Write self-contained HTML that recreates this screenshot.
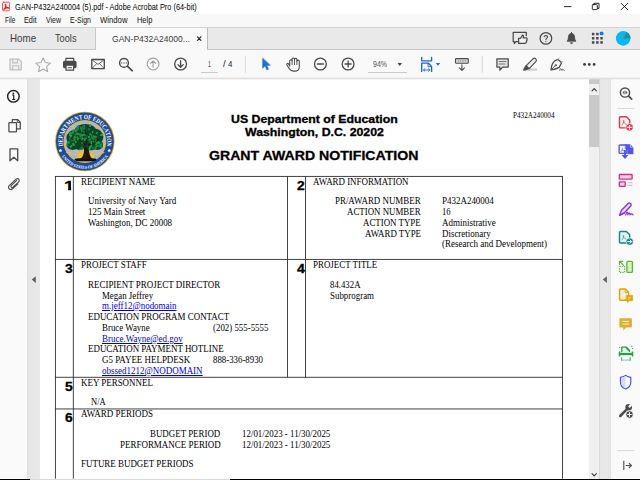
<!DOCTYPE html>
<html lang="en"><head><meta charset="utf-8"><title>GAN-P432A240004 (5).pdf - Adobe Acrobat Pro (64-bit)</title>
<style>
html,body{margin:0;padding:0}
body{width:640px;height:480px;overflow:hidden;position:relative;background:#fff;font-family:'Liberation Sans',sans-serif}
.a{position:absolute}
.t{position:absolute;white-space:pre;line-height:1;transform-origin:0 0;color:#000}
.s{font-family:'Liberation Sans',sans-serif}
.r{font-family:'Liberation Serif',serif}
.b{font-weight:bold;-webkit-text-stroke:0.3px #000}
.u{text-decoration:underline;text-decoration-thickness:0.6px;text-underline-offset:0.8px}
svg{position:absolute;left:0;top:0;overflow:visible}
</style></head><body>

<div class="a" id="titlebar" style="left:0;top:0;width:640px;height:14px;background:#fff"></div>
<div class="a" id="menubar" style="left:0;top:14px;width:640px;height:13px;background:#f8f8f8"></div>
<div class="a" id="tabbar" style="left:0;top:27px;width:640px;height:22.5px;background:#e9e9e9;border-top:1px solid #d2d2d2;box-sizing:border-box"></div>
<div class="a" id="tabline" style="left:0;top:48.8px;width:640px;height:1px;background:#c6c6c6"></div>
<div class="a" id="activetab" style="left:94.5px;top:27.5px;width:113px;height:22.5px;background:#f9f9f9;border-left:1px solid #c8c8c8;border-right:1px solid #bcbcbc;box-sizing:border-box"></div>
<div class="a" id="toolbar" style="left:0;top:50px;width:640px;height:28.5px;background:#f9f9f9"></div>
<div class="a" id="leftpane" style="left:0;top:79px;width:27px;height:401px;background:#fafafa"></div>
<div class="a" id="leftstrip" style="left:27px;top:79px;width:13px;height:401px;background:linear-gradient(to right,#dcdcdc 0,#e6e6e6 2px,#e9e9e9 100%)"></div>
<div class="a" id="page" style="left:40px;top:79px;width:549.4px;height:401px;background:#fff"></div>
<div class="a" id="vscroll" style="left:589.4px;top:79px;width:9.8px;height:401px;background:#f0f0f0">
  <div class="a" style="left:0;top:0;width:100%;height:5px;background:#c9c9c9"></div>
  <div class="a" style="left:0;top:16px;width:100%;height:52.1px;background:#c9c9c9"></div>
</div>
<div class="a" id="rightstrip" style="left:599.2px;top:79px;width:11.5px;height:401px;background:linear-gradient(to right,#d0d0d0 0,#dedede 0.9px,#e8e8e8 1.6px,#e8e8e8 10.6px,#dcdcdc 11.2px,#e6e6e6 100%)"></div>
<div class="a" id="rightpane" style="left:610.7px;top:79px;width:29.3px;height:401px;background:#fafafa"></div>
<div class="a" id="toolbarline" style="left:0;top:77.4px;width:640px;height:2.4px;background:linear-gradient(to bottom,rgba(225,225,225,0) 0,rgba(222,222,222,1) 45%,rgba(226,226,226,0) 100%)"></div>
<div class="a" id="bottombar" style="left:0;top:478.7px;width:640px;height:1.3px;background:linear-gradient(to right,#000 0,#000 30px,#d9d9d9 30px,#d9d9d9 230px,#000 230px,#000 100%)"></div>


<svg id="icons" width="640" height="480" viewBox="0 0 640 480" fill="none" stroke-linecap="round" stroke-linejoin="round">
<!-- app icon -->
<g id="appicon"><rect x="2.5" y="2.2" width="7.1" height="8.6" rx="1" fill="#fff" stroke="#ee3a3a" stroke-width="0.9"/>
<path d="M3.9 9.3C5.2 8.3 6 6.4 5.9 4.8C5.8 3.9 5.1 4.2 5.3 5.1C5.7 6.6 6.9 7.9 8.4 8.2C8.9 8 8.6 7.5 7.7 7.6C6.3 7.8 5 8.4 3.9 9.3Z" fill="#f01818" stroke="#f01818" stroke-width="1.1"/></g>
<!-- window controls -->
<g id="winctl" stroke="#111" stroke-width="0.9"><path d="M564.3 6.6H571"/>
<rect x="592.3" y="4.6" width="5" height="5" rx="0.8"/><path d="M593.8 4.4V3.3H599V8.4H597.6"/>
<path d="M621.2 3.3L627.7 9.7M627.7 3.3L621.2 9.7"/></g>
<!-- tab close -->
<path d="M197.5 36.9L200.9 40.3M200.9 36.9L197.5 40.3" stroke="#222" stroke-width="1.2"/>
<!-- tabbar right icons -->
<g id="tabicons" stroke="#4a4a4a" stroke-width="1.25">
<path d="M513.2 32.3H526.3V35.5M518 41.6H515.8L514.3 43.6V41.6H513.2V32.3"/>
<path d="M518.6 38.3H520.6L522.4 35.2C523.4 35 523.7 35.9 523.2 37.8H526.3C527.3 38 527.3 39 526.8 39.4C527.2 40 527 40.6 526.5 40.9C526.8 41.5 526.5 42.1 526 42.3C526.1 43 525.6 43.4 525 43.4H520.6L518.6 43.4Z" fill="#f4f4f4"/>
<circle cx="545.9" cy="38.4" r="5.8"/>
<path d="M544.2 36.8C544.2 35.2 547.6 35.2 547.6 36.9C547.6 38.1 545.9 38.1 545.9 39.7" stroke-width="1.1"/><circle cx="545.9" cy="41.6" r="0.55" fill="#4a4a4a" stroke="none"/>
<path d="M571.5 33.4C573.6 33.4 574.6 35 574.6 37C574.6 39.4 575.3 40.3 576 41.2H567C567.7 40.3 568.4 39.4 568.4 37C568.4 35 569.4 33.4 571.5 33.4Z" fill="#4a4a4a" stroke-width="0.8"/><path d="M571.5 32.4V33.4" stroke-width="1"/>
<path d="M570.4 43C570.8 44 572.2 44 572.6 43Z" fill="#4a4a4a" stroke-width="0.7"/>
</g>
<g id="appsgrid" fill="#4a4a4a" stroke="none">
<rect x="591.9" y="32.8" width="2.5" height="2.5"/><rect x="596.1" y="32.8" width="2.5" height="2.5"/>
<rect x="591.9" y="37" width="2.5" height="2.5"/><rect x="596.1" y="37" width="2.5" height="2.5"/><rect x="600.3" y="37" width="2.5" height="2.5"/>
<rect x="591.9" y="41.2" width="2.5" height="2.5"/><rect x="596.1" y="41.2" width="2.5" height="2.5"/><rect x="600.3" y="41.2" width="2.5" height="2.5"/>
<circle cx="601.6" cy="33.4" r="1.95" fill="#1473e6"/></g>
<g id="avatar" stroke="none"><circle cx="623.2" cy="38.4" r="7.3" fill="#0fb5ee"/><path d="M623.2 38.4L626.5 31.9A7.3 7.3 0 0 1 630.5 38.4Z" fill="#1592a8"/></g>

<!-- toolbar icons -->
<g id="tb-save" stroke="#bfbfbf" stroke-width="1.3"><path d="M10 59.1H18.6L21.3 61.8V69.8H10Z" fill="#f1f1f1"/><path d="M12.7 59.4V62.9H17.5V59.4M12.6 69.6V65.7H18.7V69.6" stroke-width="1.1"/></g>
<path id="tb-star" d="M43.1 57.9L45.25 62.6L50.4 63.15L46.55 66.6L47.65 71.6L43.1 69L38.55 71.6L39.65 66.6L35.8 63.15L40.95 62.6Z" stroke="#a6a6a6" stroke-width="1.05"/>
<g id="tb-print" stroke="#4a4a4a" stroke-width="1.2"><path d="M65.9 61.4V58.4H73.7V61.4"/><rect x="63.6" y="61.4" width="12.4" height="6.2" rx="1" fill="#4a4a4a"/><rect x="66" y="65.2" width="7.6" height="5" fill="#f9f9f9"/><path d="M68 67.7H71.6" stroke-width="0.9"/></g>
<g id="tb-mail" stroke="#4a4a4a" stroke-width="1.3"><rect x="91.8" y="59.5" width="12.5" height="9.1"/><path d="M92 59.8L98 64.4L104.1 59.8M92 68.4L96.7 63.6M104.1 68.4L99.4 63.6" stroke-width="0.8"/></g>
<g id="tb-find" stroke="#4a4a4a"><circle cx="124" cy="62.9" r="4.4" stroke-width="1.4"/><path d="M127.4 66.2L132.1 70.7" stroke-width="1.8"/><path d="M121.7 62.9h0.01M124 62.9h0.01M126.3 62.9h0.01" stroke-width="1.25"/></g>
<g id="tb-up" stroke="#9e9e9e" stroke-width="1.05"><circle cx="153.1" cy="64" r="5.9"/><path d="M153.1 67.3V60.9M150.5 63.4L153.1 60.8L155.7 63.4"/></g>
<g id="tb-down" stroke="#4a4a4a" stroke-width="1.3"><circle cx="180.6" cy="64" r="5.9"/><path d="M180.6 60.7V67.1M178 64.6L180.6 67.2L183.2 64.6"/></g>
<path d="M201 72.5H217.8M368 72.5H407" stroke="#c4c4c4" stroke-width="0.9" stroke-linecap="butt"/>
<path d="M245.4 55.6V72.8M482.3 55.6V72.8" stroke="#d6d6d6" stroke-width="0.9" stroke-linecap="butt"/>
<path id="tb-select" d="M262.6 58.3V68.3L265.1 66L266.9 70L268.6 69.2L266.8 65.4L270.2 65.2Z" fill="#1f6fd6" stroke="#1f6fd6" stroke-width="0.5"/>
<g id="tb-hand" stroke="#4a4a4a" stroke-width="1.05" fill="#f9f9f9"><path d="M289.7 66V60.7C289.7 59.3 292.1 59.3 292.1 60.7V59.1C292.1 57.7 294.5 57.7 294.5 59.1V59.4C294.5 58 296.9 58 296.9 59.4V61.1C296.9 59.8 299.3 59.8 299.3 61.1V66.4C299.3 69.4 297.4 71.1 294.8 71.1H293.6C291.7 71.1 290.5 70.4 289.3 68.6L286.9 65C286.1 63.8 287.6 62.8 288.5 63.9L289.7 65.6"/><path d="M292.1 60.7V64.6M294.5 59.1V64.6M296.9 61V64.6" stroke-width="0.9"/></g>
<g id="tb-zoomout" stroke="#4a4a4a" stroke-width="1.3"><circle cx="320.4" cy="64" r="5.9"/><path d="M317.4 64H323.4"/></g>
<g id="tb-zoomin" stroke="#4a4a4a" stroke-width="1.3"><circle cx="348.1" cy="64" r="5.9"/><path d="M345.1 64H351.1M348.1 61V67"/></g>
<path d="M397.5 62.9H402L399.75 65.9Z" fill="#444" stroke="none"/>
<g id="tb-fit" stroke="#1b67d2" stroke-width="1.35"><path d="M421.7 57.3V60.8H431.6V57.3"/><path d="M421.7 71.4V63.1H428.2L431.6 66.5V71.4" /><path d="M428 63.3V66.7H431.4" stroke-width="0.9"/><path d="M423.6 70H429.8M424.8 68.8L423.5 70L424.8 71.2M428.6 68.8L429.9 70L428.6 71.2" stroke-width="0.9"/></g>
<path d="M435.8 62.9H440.2L438 65.7Z" fill="#1f6fd6" stroke="none"/>
<g id="tb-scroll" stroke="#4a4a4a" stroke-width="1.1"><rect x="455.5" y="58.6" width="12.8" height="4.6" rx="0.8" fill="#d8d8d8"/><path d="M458.4 60.9h0.01M460.7 60.9h0.01M463 60.9h0.01M465.3 60.9h0.01" stroke-width="1.2" stroke="#777"/><path d="M461.9 64.9V70.3M459.4 67.9L461.9 70.4L464.4 67.9"/></g>
<g id="tb-comment" stroke="#4a4a4a" stroke-width="1.25"><path d="M496.9 58.8H508.2V67.1H502.6L499.9 70.2V67.1H496.9Z" fill="#e4e4e4"/><path d="M499.2 61.5H506M499.2 64H505" stroke-width="0.9" stroke="#6a6a6a"/></g>
<g id="tb-highlight"><rect x="527.4" y="68.4" width="9.6" height="2.3" fill="#cdcdcd" stroke="none"/><path d="M526 65.8L533.2 58.7C534.8 57.3 537.4 59.6 536 61.3L529.2 68.6Z" stroke="#4a4a4a" stroke-width="1.15" fill="#efefef"/><path d="M526 65.8L529.2 68.6L526.6 69.9L523.3 70.4L524.4 67.6Z" fill="#4a4a4a" stroke="#4a4a4a" stroke-width="0.6"/></g>
<g id="tb-sign" stroke="#4a4a4a" stroke-width="1.25"><path d="M558 59.4L561.6 62.8L559.2 67.4C556.6 68.8 553.8 69.6 551 70L551.5 66.6C552.2 63.8 553.6 61.4 555.8 60.4Z"/><path d="M551.3 69.7L555.2 65.6" stroke-width="0.9"/><circle cx="555.7" cy="65.2" r="0.8" stroke-width="0.7"/><path d="M558 59.4L559.4 57.8M561.6 62.8L563 61.4" stroke-width="0.9" stroke="#aaa"/><path d="M559.6 70.3C560.2 68 561.4 68 561.2 70.3C561.8 68.6 562.8 68.6 562.8 70.3C563.4 69.4 564 69.5 564.4 70.2" stroke-width="0.8"/></g>
<g id="tb-more" fill="#3a3a3a" stroke="none"><circle cx="584.5" cy="64.4" r="1.35"/><circle cx="589.3" cy="64.4" r="1.35"/><circle cx="594.1" cy="64.4" r="1.35"/></g>

<!-- left pane icons -->
<g id="lp-info" stroke="#1e1e1e"><circle cx="13.4" cy="96.3" r="5.8" stroke-width="1.4"/><path d="M12.3 95.2H13.7V99.2M12.1 99.5H15.2" stroke-width="1.2" stroke-linecap="butt"/><circle cx="13.4" cy="93.3" r="0.9" fill="#1e1e1e" stroke="none"/></g>
<g id="lp-pages" stroke="#4a4a4a" stroke-width="1.25"><path d="M12.3 122.2V119.5H17.5L20.3 122.3V128.9H16.7"/><path d="M17.3 119.7V122.5H20.1" stroke-width="0.9"/><rect x="8.9" y="122.5" width="7.6" height="9.3" rx="0.6"/></g>
<path id="lp-bookmark" d="M10 148.8H17.7V160.8L13.85 157.3L10 160.8Z" stroke="#4a4a4a" stroke-width="1.3"/>
<path id="lp-attach" d="M16.6 180.6L11.4 185.4C10.2 186.6 11.8 188.2 13 187.1L18.4 182.1C20.6 180 18 177.4 15.8 179.4L9.4 185.3C6.8 187.8 10.2 191 12.8 188.5L17.9 183.8" stroke="#4a4a4a" stroke-width="1.15"/>
<path d="M35.8 276.3V282.9L31.7 279.6Z" fill="#5e5e5e" stroke="none"/>
<path d="M606.9 276.3V282.9L602.8 279.6Z" fill="#5e5e5e" stroke="none"/>
<!-- scrollbar arrows -->
<path d="M592 90.8L594.2 88.6L596.4 90.8" stroke="#333" stroke-width="1.1"/>
<path d="M592 473.6L594.2 475.8L596.4 473.6" stroke="#333" stroke-width="1.1"/>

<!-- right pane icons -->
<g id="rp-search" stroke="#4a4a4a"><circle cx="625" cy="92.5" r="4.6" stroke-width="1.45"/><path d="M628.6 96.2L631.7 99.2" stroke-width="1.7"/><path d="M624.3 91L622.7 92.5L624.3 94ZM625.8 91L627.4 92.5L625.8 94Z" fill="#4a4a4a" stroke-width="0.3"/></g>
<path d="M617 108.5H634.4M617 450.6H634.4" stroke="#d4d4d4" stroke-width="0.9" stroke-linecap="butt"/>
<g id="rp-create" stroke="#df3548"><path d="M620.4 116.8H626.4L629.7 120.1V127C629.7 127.5 629.3 127.9 628.8 127.9H620.4C619.9 127.9 619.5 127.5 619.5 127V117.7C619.5 117.2 619.9 116.8 620.4 116.8Z" stroke-width="1.4" fill="#fdf0f1"/><path d="M621.8 125.2C623.2 124 624 122.2 624 120.8C623.8 119.8 623.2 120.2 623.4 121.2C623.8 122.8 625 124 626.4 124.2" stroke-width="0.65"/><circle cx="629.5" cy="127.3" r="3.7" fill="#df3548" stroke="#fafafa" stroke-width="0.7"/><path d="M627.5 127.3H631.5M629.5 125.3V129.3" stroke="#fff" stroke-width="1.05"/></g>
<g id="rp-export" stroke="#5056e6"><rect x="619.1" y="145" width="7.6" height="8.3" rx="0.9" stroke-width="1.3" fill="#f2f2fe"/><path d="M625.6 144.5H630.2L633.1 147.4V153.9H627.6V149H625.6Z" fill="#5056e6" stroke-width="0.6"/><path d="M630.4 144.8V147.2H632.8" stroke="#fafafa" stroke-width="0.6"/><path d="M621 151.4C622 150.4 622.6 149.2 622.6 148.2M622.4 150.4C623.2 150.8 623.8 150.8 624.4 150.6" stroke-width="0.7"/><path d="M625 150V156" stroke-width="1.9" stroke-linecap="butt"/><path d="M625 150V153.2" stroke="#fafafa" stroke-width="3" stroke-linecap="butt" opacity="0"/><path d="M621.5 154.9H628.5L625 158.9Z" fill="#5056e6" stroke="none"/></g>
<g id="rp-organize" stroke="#cf2f8a"><rect x="619.3" y="174.5" width="12.8" height="4.6" rx="0.7" stroke-width="1.35" fill="#f4cfe4"/><rect x="619.3" y="181.8" width="5.9" height="4.5" rx="0.6" stroke-width="1.35" fill="#f4cfe4"/><path d="M627.7 182.7H632.5M627.7 185.3H632.5" stroke="#ecaad0" stroke-width="1.1" stroke-linecap="butt"/></g>
<g id="rp-sign" stroke="#8a31e2" stroke-width="1.4"><path d="M619.6 215.3L621.5 210.3L628.2 203.5C629.8 202 632.2 204.4 630.7 206L624.2 212.9Z" fill="#eadcfb"/><path d="M619.6 215.4L624.2 213" stroke-width="1.2"/><path d="M625.8 215C626.5 211.4 628.1 211.4 627.9 214.8C628.7 212.4 629.9 212.4 629.9 214.8C630.7 213.5 631.9 213.7 632.9 214.9" stroke-width="1.25"/></g>
<g id="rp-send" stroke="#16868c"><path d="M620.4 231.5H626.4L629.7 234.8V242.1C629.7 242.6 629.3 243 628.8 243H620.4C619.9 243 619.5 242.6 619.5 242.1V232.4C619.5 231.9 619.9 231.5 620.4 231.5Z" stroke-width="1.4" fill="#e3f2f3"/><path d="M621.8 240C623 239 623.8 237.2 623.8 235.8C623.6 234.8 623 235.2 623.2 236.2C623.6 237.8 624.6 238.8 626 239" stroke-width="0.6"/><circle cx="629.7" cy="241.6" r="3.7" fill="#16868c" stroke="#fafafa" stroke-width="0.7"/><path d="M627.7 241.6H631.4M630 239.9L631.7 241.6L630 243.3" stroke="#fff" stroke-width="0.95"/></g>
<g id="rp-compress" stroke="#5abc2a"><rect x="626.9" y="261.3" width="5.5" height="11.1" rx="0.9" stroke-width="1.35" fill="#dcf1ce"/><path d="M619.4 266.5H624.6V272.4H619.4Z" stroke-width="1.1" stroke-dasharray="1.4 1" stroke-linecap="butt"/><path d="M619.5 261.3H622.7M619.5 261.3V264.5M619.8 261.6L623.6 265.4" stroke-width="1.15"/></g>
<g id="rp-commentdoc" stroke="#d7a50c"><path d="M620.4 289H625.4L628.7 292.3V299.3C628.7 299.8 628.3 300.2 627.8 300.2H620.4C619.9 300.2 619.5 299.8 619.5 299.3V289.9C619.5 289.4 619.9 289 620.4 289Z" stroke-width="1.4" fill="#f4ecd2"/><path d="M625.2 289.2V292.5H628.5" stroke-width="0.9"/><path d="M626.5 295.4H632.6V300.7H629.2L627.6 302.5V300.7H626.5Z" fill="#d7a50c" stroke-width="0.7"/><path d="M628 297.4H631.2M628 298.9H630.4" stroke="#f7edc8" stroke-width="0.6" stroke-linecap="butt"/></g>
<g id="rp-comment"><path d="M620.4 318.2H630.9C631.5 318.2 631.9 318.6 631.9 319.2V326.4C631.9 327 631.5 327.4 630.9 327.4H626L623.3 330.8V327.4H620.4C619.8 327.4 619.4 327 619.4 326.4V319.2C619.4 318.6 619.8 318.2 620.4 318.2Z" fill="#dbb02c" stroke="none"/><path d="M622.4 321.4H629M622.4 324H629" stroke="#fbf3d8" stroke-width="1" stroke-linecap="butt"/></g>
<g id="rp-scan" stroke="#23a148"><path d="M621.8 351.6V347.1H626.2L629.4 350.3V351.6" stroke-width="1.3" fill="#e3f4e8"/><path d="M626 347.2C626.3 349.4 627.4 350.3 629.3 350.5Z" fill="#23a148" stroke-width="0.8"/><path d="M619.5 351.4V356.6M632.5 351.4V356.6" stroke-width="1.5" stroke-linecap="butt"/><path d="M619.5 354H632.5" stroke-width="2.3" stroke-linecap="butt"/><path d="M621.7 357.6V360.4M630.2 357.6V360.4" stroke-width="0.9"/><path d="M622.6 360.1H629.6" stroke-width="1" stroke-dasharray="1.1 0.9" stroke-linecap="butt"/><path d="M619.7 347.4h0.01M631.8 346.4h0.01M632.6 348.6h0.01" stroke-width="1.1"/></g>
<g id="rp-protect" stroke="#3d45ec" stroke-width="1.1"><path d="M625.6 375.4C627.4 376.6 629 377.2 630.8 377.4V382C630.8 385.4 628.6 387.8 625.6 389C622.6 387.8 620.4 385.4 620.4 382V377.4C622.2 377.2 623.8 376.6 625.6 375.4Z" fill="#fafafa"/><path d="M625.6 376C624 377 622.6 377.6 620.9 377.8V382C620.9 385 622.8 387.2 625.6 388.4Z" fill="#d9dbf7" stroke="none"/></g>
<g id="rp-tools" stroke="#4a4a4a"><path d="M620.2 416L627 409.2" stroke-width="2.5"/><circle cx="628.7" cy="407.3" r="3.3" fill="#4a4a4a" stroke="none"/><path d="M628.9 407.1L632.6 403.4" stroke="#fafafa" stroke-width="2.3" stroke-linecap="butt"/><circle cx="629.5" cy="414.5" r="3.7" fill="#4a4a4a" stroke="#fafafa" stroke-width="0.8"/><path d="M627.6 414.5H631.4M629.5 412.6V416.4" stroke="#fff" stroke-width="1"/></g>
<g id="rp-collapse" stroke="#4a4a4a" stroke-width="1.1"><path d="M623.8 460.8V470" stroke-linecap="butt"/><path d="M626.2 465.5H631.2M629.2 463.4L631.4 465.5L629.2 467.6"/></g>
</svg>


<svg id="docpage" width="640" height="480" viewBox="0 0 640 480" fill="none">
<g id="table" stroke="#2e2e2e" stroke-width="0.9">
<path d="M55 176.45H563M55 259.45H563M55 377.3H563M55 408.95H563"/>
<path d="M55.45 176V478.7M73.35 176.4V478.7M562.5 176V478.7"/>
<path d="M287.5 176.4V377.3M305.5 176.4V377.3"/>
</g>
<g id="seal" transform="translate(84.85 141.5)">
<circle r="29.8" fill="#e2b01e"/>
<circle r="28.9" fill="#1c4a9c"/>
<circle r="21.4" fill="#e6b820"/>
<circle r="20.4" fill="#a9b3e3"/>
<g stroke="#ecc42c" stroke-width="1.1">
<path d="M0.5 15.5L-20 3M0.5 15.5L-18 -8.5M0.5 15.5L-12 -16M0.5 15.5L-4.5 -19.8M0.5 15.5L5.5 -19.8M0.5 15.5L13 -15.5M0.5 15.5L18.6 -8M0.5 15.5L20.2 3.5M0.5 15.5L-19 10.5M0.5 15.5L19.5 11"/>
</g>
<path d="M-8 17.6A8.6 7.4 0 0 1 9.2 17.6Z" fill="#f2c81c"/>
<path d="M-9.8 17.2C-6 16.2 7.4 16.2 11.2 17.2C12.4 18.4 10.6 19.6 7 19.8H-5.6C-9.2 19.6 -11 18.4 -9.8 17.2Z" fill="#15100b"/>
<path d="M-4.2 17.6C-1 14.2 -0.4 10.2 -1 5.6L-7 0L-5.4 -1.2L0.2 3.2L1.8 -3L3.8 -2.6L3.4 4.2L9 0.4L10 1.8L4.2 7C4 11.4 4.8 14.6 7.4 17.6Z" fill="#24160c"/>
<g fill="#0d4423"><ellipse cx="-8.5" cy="-3.5" rx="10" ry="8.5"/><ellipse cx="9" cy="-4.5" rx="9.5" ry="8.5"/><ellipse cx="0.5" cy="-10.5" rx="11" ry="7"/><ellipse cx="-12" cy="3.5" rx="6.2" ry="5"/><ellipse cx="12.5" cy="3.5" rx="5.8" ry="5"/><ellipse cx="0" cy="-2" rx="9" ry="7.5"/><ellipse cx="-5" cy="5" rx="5" ry="3.5"/><ellipse cx="6.5" cy="5.5" rx="5" ry="3.2"/></g>
<path d="M0.8 4L-6 -3L-10.5 -4.5M-6 -3L-6.5 -8.5M1.2 3L2.4 -5L0 -10.5M2.4 -5L6.5 -9.5M3.4 4L9.5 -1L14 -2M9.5 -1L11 -6.5" stroke="#1e140c" stroke-width="1.1" fill="none"/>
<g><ellipse cx="-6.7" cy="-13.8" rx="1.6" ry="0.7" transform="rotate(96 -6.7 -13.8)" fill="#15803a"/><ellipse cx="-3.1" cy="-11.3" rx="1.5" ry="0.7" transform="rotate(102 -3.1 -11.3)" fill="#1f9a46"/><ellipse cx="5.0" cy="-1.7" rx="1.1" ry="0.9" transform="rotate(9 5.0 -1.7)" fill="#1f9a46"/><ellipse cx="-8.0" cy="-14.0" rx="1.2" ry="0.8" transform="rotate(147 -8.0 -14.0)" fill="#1f9a46"/><ellipse cx="-15.1" cy="-2.0" rx="1.3" ry="0.7" transform="rotate(128 -15.1 -2.0)" fill="#137636"/><ellipse cx="6.9" cy="-6.0" rx="1.4" ry="0.9" transform="rotate(82 6.9 -6.0)" fill="#15803a"/><ellipse cx="-7.6" cy="-4.1" rx="1.4" ry="0.9" transform="rotate(110 -7.6 -4.1)" fill="#1b9042"/><ellipse cx="-14.5" cy="-6.3" rx="1.7" ry="0.8" transform="rotate(88 -14.5 -6.3)" fill="#1b9042"/><ellipse cx="12.1" cy="-8.5" rx="1.4" ry="0.9" transform="rotate(143 12.1 -8.5)" fill="#1b9042"/><ellipse cx="-16.7" cy="1.6" rx="1.6" ry="1.1" transform="rotate(148 -16.7 1.6)" fill="#15803a"/><ellipse cx="8.2" cy="6.8" rx="1.4" ry="1.1" transform="rotate(64 8.2 6.8)" fill="#137636"/><ellipse cx="-9.6" cy="-7.1" rx="1.8" ry="0.7" transform="rotate(81 -9.6 -7.1)" fill="#137636"/><ellipse cx="-2.6" cy="-2.6" rx="1.7" ry="1.1" transform="rotate(123 -2.6 -2.6)" fill="#26a851"/><ellipse cx="-10.1" cy="-4.4" rx="1.6" ry="0.8" transform="rotate(1 -10.1 -4.4)" fill="#26a851"/><ellipse cx="-6.9" cy="-14.5" rx="1.8" ry="1.1" transform="rotate(118 -6.9 -14.5)" fill="#1b9042"/><ellipse cx="10.6" cy="6.5" rx="1.7" ry="0.9" transform="rotate(72 10.6 6.5)" fill="#1b9042"/><ellipse cx="-0.7" cy="-6.8" rx="1.3" ry="1.1" transform="rotate(79 -0.7 -6.8)" fill="#1b9042"/><ellipse cx="-15.1" cy="-7.8" rx="1.1" ry="1.0" transform="rotate(111 -15.1 -7.8)" fill="#1f9a46"/><ellipse cx="3.9" cy="-4.7" rx="1.2" ry="0.9" transform="rotate(176 3.9 -4.7)" fill="#26a851"/><ellipse cx="-0.6" cy="-15.6" rx="1.2" ry="0.8" transform="rotate(48 -0.6 -15.6)" fill="#1f9a46"/><ellipse cx="7.3" cy="-3.5" rx="1.3" ry="1.1" transform="rotate(65 7.3 -3.5)" fill="#1b9042"/><ellipse cx="13.8" cy="1.5" rx="1.3" ry="0.8" transform="rotate(30 13.8 1.5)" fill="#1f9a46"/><ellipse cx="-10.5" cy="-2.8" rx="1.5" ry="1.0" transform="rotate(110 -10.5 -2.8)" fill="#1f9a46"/><ellipse cx="11.6" cy="4.9" rx="1.7" ry="0.8" transform="rotate(93 11.6 4.9)" fill="#15803a"/><ellipse cx="11.0" cy="-4.8" rx="1.3" ry="0.9" transform="rotate(62 11.0 -4.8)" fill="#1f9a46"/><ellipse cx="4.7" cy="7.2" rx="1.8" ry="0.9" transform="rotate(118 4.7 7.2)" fill="#1f9a46"/><ellipse cx="5.4" cy="5.4" rx="1.2" ry="0.9" transform="rotate(128 5.4 5.4)" fill="#1f9a46"/><ellipse cx="-0.8" cy="-13.0" rx="1.7" ry="0.8" transform="rotate(144 -0.8 -13.0)" fill="#1b9042"/><ellipse cx="-4.0" cy="-6.8" rx="1.9" ry="1.0" transform="rotate(31 -4.0 -6.8)" fill="#1f9a46"/><ellipse cx="4.2" cy="-1.3" rx="1.5" ry="1.1" transform="rotate(28 4.2 -1.3)" fill="#137636"/><ellipse cx="-2.5" cy="6.4" rx="1.8" ry="0.8" transform="rotate(45 -2.5 6.4)" fill="#15803a"/><ellipse cx="-6.6" cy="-2.8" rx="1.8" ry="0.7" transform="rotate(133 -6.6 -2.8)" fill="#26a851"/><ellipse cx="6.2" cy="4.8" rx="1.5" ry="1.0" transform="rotate(158 6.2 4.8)" fill="#1f9a46"/><ellipse cx="1.2" cy="-3.3" rx="1.1" ry="0.9" transform="rotate(33 1.2 -3.3)" fill="#1b9042"/><ellipse cx="-13.6" cy="-0.7" rx="1.2" ry="0.7" transform="rotate(123 -13.6 -0.7)" fill="#137636"/><ellipse cx="-15.0" cy="-2.3" rx="1.3" ry="0.8" transform="rotate(139 -15.0 -2.3)" fill="#137636"/><ellipse cx="4.0" cy="-12.4" rx="1.3" ry="0.9" transform="rotate(145 4.0 -12.4)" fill="#137636"/><ellipse cx="16.8" cy="1.6" rx="1.8" ry="1.1" transform="rotate(47 16.8 1.6)" fill="#137636"/><ellipse cx="-2.0" cy="-6.3" rx="1.4" ry="0.8" transform="rotate(121 -2.0 -6.3)" fill="#26a851"/><ellipse cx="-16.2" cy="0.7" rx="1.7" ry="1.1" transform="rotate(28 -16.2 0.7)" fill="#1b9042"/><ellipse cx="5.5" cy="-7.7" rx="1.3" ry="0.8" transform="rotate(84 5.5 -7.7)" fill="#1b9042"/><ellipse cx="17.2" cy="-6.8" rx="1.5" ry="1.1" transform="rotate(150 17.2 -6.8)" fill="#1f9a46"/><ellipse cx="-3.7" cy="-6.2" rx="1.4" ry="0.7" transform="rotate(66 -3.7 -6.2)" fill="#15803a"/><ellipse cx="2.1" cy="-5.7" rx="1.1" ry="0.8" transform="rotate(112 2.1 -5.7)" fill="#137636"/><ellipse cx="-12.1" cy="3.2" rx="1.8" ry="1.0" transform="rotate(122 -12.1 3.2)" fill="#15803a"/><ellipse cx="-3.6" cy="-3.0" rx="1.5" ry="0.9" transform="rotate(59 -3.6 -3.0)" fill="#15803a"/><ellipse cx="-16.8" cy="1.3" rx="1.4" ry="0.7" transform="rotate(169 -16.8 1.3)" fill="#1b9042"/><ellipse cx="4.1" cy="-11.8" rx="1.3" ry="0.7" transform="rotate(2 4.1 -11.8)" fill="#137636"/><ellipse cx="4.9" cy="-3.1" rx="1.3" ry="0.9" transform="rotate(121 4.9 -3.1)" fill="#15803a"/><ellipse cx="8.9" cy="-2.6" rx="1.3" ry="0.9" transform="rotate(168 8.9 -2.6)" fill="#1b9042"/><ellipse cx="6.0" cy="0.2" rx="1.6" ry="0.9" transform="rotate(160 6.0 0.2)" fill="#137636"/><ellipse cx="-7.3" cy="-12.0" rx="1.3" ry="0.8" transform="rotate(159 -7.3 -12.0)" fill="#1b9042"/><ellipse cx="5.2" cy="-6.7" rx="1.4" ry="0.7" transform="rotate(23 5.2 -6.7)" fill="#1b9042"/><ellipse cx="4.8" cy="6.6" rx="1.4" ry="0.7" transform="rotate(120 4.8 6.6)" fill="#26a851"/><ellipse cx="14.1" cy="0.8" rx="1.3" ry="0.8" transform="rotate(53 14.1 0.8)" fill="#26a851"/><ellipse cx="-12.0" cy="-10.5" rx="1.1" ry="0.8" transform="rotate(59 -12.0 -10.5)" fill="#137636"/><ellipse cx="-12.0" cy="-8.6" rx="1.2" ry="0.8" transform="rotate(118 -12.0 -8.6)" fill="#1f9a46"/><ellipse cx="-10.2" cy="-1.6" rx="1.5" ry="1.0" transform="rotate(118 -10.2 -1.6)" fill="#1b9042"/><ellipse cx="10.8" cy="-1.3" rx="1.7" ry="1.0" transform="rotate(89 10.8 -1.3)" fill="#15803a"/><ellipse cx="8.5" cy="0.0" rx="1.1" ry="1.0" transform="rotate(161 8.5 0.0)" fill="#1b9042"/><ellipse cx="-2.7" cy="1.6" rx="1.5" ry="1.1" transform="rotate(136 -2.7 1.6)" fill="#137636"/><ellipse cx="12.7" cy="4.5" rx="1.8" ry="0.9" transform="rotate(161 12.7 4.5)" fill="#1b9042"/><ellipse cx="-4.7" cy="-5.4" rx="1.1" ry="0.7" transform="rotate(96 -4.7 -5.4)" fill="#1f9a46"/><ellipse cx="11.3" cy="3.0" rx="1.5" ry="0.9" transform="rotate(119 11.3 3.0)" fill="#1b9042"/><ellipse cx="9.3" cy="-4.7" rx="1.7" ry="1.0" transform="rotate(42 9.3 -4.7)" fill="#1f9a46"/><ellipse cx="-11.2" cy="2.7" rx="1.9" ry="0.9" transform="rotate(69 -11.2 2.7)" fill="#26a851"/><ellipse cx="-11.5" cy="-1.2" rx="1.4" ry="1.0" transform="rotate(125 -11.5 -1.2)" fill="#137636"/><ellipse cx="6.5" cy="1.4" rx="1.6" ry="0.8" transform="rotate(93 6.5 1.4)" fill="#26a851"/><ellipse cx="-1.0" cy="-9.9" rx="1.2" ry="0.9" transform="rotate(179 -1.0 -9.9)" fill="#15803a"/><ellipse cx="-4.3" cy="7.7" rx="1.8" ry="0.7" transform="rotate(16 -4.3 7.7)" fill="#1b9042"/><ellipse cx="-14.0" cy="5.0" rx="1.5" ry="1.1" transform="rotate(127 -14.0 5.0)" fill="#1f9a46"/><ellipse cx="-4.0" cy="-13.5" rx="1.9" ry="1.0" transform="rotate(73 -4.0 -13.5)" fill="#1b9042"/><ellipse cx="-13.7" cy="-8.4" rx="1.4" ry="1.0" transform="rotate(0 -13.7 -8.4)" fill="#1f9a46"/><ellipse cx="-6.1" cy="-6.8" rx="1.9" ry="0.8" transform="rotate(2 -6.1 -6.8)" fill="#1b9042"/><ellipse cx="-8.0" cy="-7.6" rx="1.4" ry="1.1" transform="rotate(106 -8.0 -7.6)" fill="#15803a"/><ellipse cx="16.2" cy="3.2" rx="1.8" ry="0.8" transform="rotate(9 16.2 3.2)" fill="#1b9042"/><ellipse cx="-9.5" cy="-10.6" rx="1.5" ry="0.8" transform="rotate(67 -9.5 -10.6)" fill="#26a851"/><ellipse cx="14.6" cy="4.7" rx="1.6" ry="1.1" transform="rotate(169 14.6 4.7)" fill="#137636"/><ellipse cx="16.5" cy="-6.5" rx="1.6" ry="0.8" transform="rotate(157 16.5 -6.5)" fill="#26a851"/><ellipse cx="-14.2" cy="-4.8" rx="1.4" ry="0.8" transform="rotate(133 -14.2 -4.8)" fill="#1b9042"/><ellipse cx="-9.1" cy="0.4" rx="1.3" ry="0.9" transform="rotate(71 -9.1 0.4)" fill="#1f9a46"/><ellipse cx="5.4" cy="-15.9" rx="1.5" ry="1.0" transform="rotate(99 5.4 -15.9)" fill="#26a851"/><ellipse cx="-1.9" cy="-14.1" rx="1.3" ry="0.7" transform="rotate(62 -1.9 -14.1)" fill="#1b9042"/><ellipse cx="-6.9" cy="-7.7" rx="1.7" ry="0.8" transform="rotate(4 -6.9 -7.7)" fill="#1f9a46"/><ellipse cx="-3.3" cy="-6.4" rx="1.5" ry="0.9" transform="rotate(61 -3.3 -6.4)" fill="#1b9042"/><ellipse cx="-0.1" cy="-1.9" rx="1.4" ry="1.0" transform="rotate(95 -0.1 -1.9)" fill="#1f9a46"/><ellipse cx="-8.7" cy="-11.0" rx="1.4" ry="0.9" transform="rotate(172 -8.7 -11.0)" fill="#1f9a46"/><ellipse cx="-14.2" cy="-6.1" rx="1.7" ry="1.0" transform="rotate(174 -14.2 -6.1)" fill="#26a851"/><ellipse cx="16.2" cy="5.1" rx="1.8" ry="1.1" transform="rotate(45 16.2 5.1)" fill="#1b9042"/><ellipse cx="12.4" cy="1.6" rx="1.8" ry="1.1" transform="rotate(15 12.4 1.6)" fill="#1f9a46"/><ellipse cx="-17.5" cy="3.9" rx="1.3" ry="1.1" transform="rotate(116 -17.5 3.9)" fill="#15803a"/><ellipse cx="1.1" cy="-5.8" rx="1.7" ry="0.7" transform="rotate(54 1.1 -5.8)" fill="#137636"/><ellipse cx="-11.7" cy="-10.7" rx="1.7" ry="0.7" transform="rotate(97 -11.7 -10.7)" fill="#26a851"/><ellipse cx="-8.4" cy="-9.1" rx="1.8" ry="0.8" transform="rotate(95 -8.4 -9.1)" fill="#137636"/><ellipse cx="7.8" cy="-9.4" rx="1.1" ry="0.9" transform="rotate(121 7.8 -9.4)" fill="#26a851"/></g>
<path id="arcTop" d="M-22.1 3.3A22.35 22.35 0 1 1 22.1 3.3" fill="none"/>
<path id="arcBot" d="M-23.6 14A27.45 27.45 0 0 0 23.6 14" fill="none"/>
<text font-family="'Liberation Serif',serif" font-weight="bold" font-size="6.5" fill="#fff" text-anchor="middle"><textPath href="#arcTop" startOffset="50%" textLength="79" lengthAdjust="spacingAndGlyphs">DEPARTMENT OF EDUCATION</textPath></text>
<text font-family="'Liberation Serif',serif" font-weight="bold" font-size="4.5" fill="#fff" text-anchor="middle"><textPath href="#arcBot" startOffset="50%" textLength="55" lengthAdjust="spacingAndGlyphs">UNITED STATES OF AMERICA</textPath></text>
<path d="M-24.4 7.2l.55 1.15 1.25.15-.9.9.25 1.25-1.15-.6-1.15.6.25-1.25-.9-.9 1.25-.15zM24.4 7.2l.55 1.15 1.25.15-.9.9.25 1.25-1.15-.6-1.15.6.25-1.25-.9-.9 1.25-.15z" fill="#fff"/>
</g>
</svg>

<div id="window-title"><span class="t s" style="left:15.00px;top:3px;font-size:8.8px;transform:scaleX(0.8373);">GAN-P432A240004 (5).pdf - Adobe Acrobat Pro (64-bit)</span></div>
<div id="menu-items"><span class="t s" style="left:5.00px;top:16px;font-size:8.4px;transform:scaleX(0.7630);color:#111;">File</span>
<span class="t s" style="left:24.00px;top:16px;font-size:8.4px;transform:scaleX(0.8727);color:#111;">Edit</span>
<span class="t s" style="left:46.00px;top:16px;font-size:8.4px;transform:scaleX(0.8326);color:#111;">View</span>
<span class="t s" style="left:70.00px;top:16px;font-size:8.4px;transform:scaleX(0.8353);color:#111;">E-Sign</span>
<span class="t s" style="left:100.00px;top:16px;font-size:8.4px;transform:scaleX(0.9229);color:#111;">Window</span>
<span class="t s" style="left:137.00px;top:16px;font-size:8.4px;transform:scaleX(0.8878);color:#111;">Help</span></div>
<div id="tab-labels"><span class="t s" style="left:10.20px;top:33px;font-size:10.5px;transform:scaleX(0.9316);color:#3c3c3c;">Home</span>
<span class="t s" style="left:55.30px;top:33px;font-size:10.5px;transform:scaleX(0.8770);color:#3c3c3c;">Tools</span>
<span class="t s" style="left:111.60px;top:35px;font-size:8.9px;transform:scaleX(0.9639);color:#3c3c3c;">GAN-P432A24000...</span></div>
<div id="toolbar-labels"><span class="t s" style="left:207.90px;top:60px;font-size:8.4px;transform:scaleX(0.6207);color:#4a4a4a;">1</span>
<span class="t s" style="left:222.50px;top:60px;font-size:8.4px;transform:scaleX(1.1597);color:#222;">/</span>
<span class="t s" style="left:228.30px;top:60px;font-size:8.4px;transform:scaleX(0.9418);color:#222;">4</span>
<span class="t s" style="left:372.90px;top:60px;font-size:8.4px;transform:scaleX(0.8410);color:#555;">94%</span></div>
<div id="document-text"><span class="t s b" style="left:230.90px;top:115px;font-size:10.2px;transform:scaleX(1.2070);">US Department of Education</span>
<span class="t s b" style="left:245.00px;top:128px;font-size:10.2px;transform:scaleX(1.2058);">Washington, D.C. 20202</span>
<span class="t s b" style="left:209.20px;top:149px;font-size:13.2px;transform:scaleX(1.0705);">GRANT AWARD NOTIFICATION</span>
<span class="t r" style="left:513.10px;top:113px;font-size:7.2px;transform:scaleX(0.9989);">P432A240004</span>
<span class="t s b" style="left:64.25px;top:180px;font-size:12.4px;transform:scaleX(1.4986);clip-path:polygon(0 0,4.85px 0,4.85px 100%,2.7px 100%,2.7px 7px,0 7px);">1</span>
<span class="t s b" style="left:296.80px;top:180px;font-size:12.4px;transform:scaleX(1.1149);">2</span>
<span class="t s b" style="left:64.60px;top:263px;font-size:12.4px;transform:scaleX(1.1149);">3</span>
<span class="t s b" style="left:296.60px;top:263px;font-size:12.4px;transform:scaleX(1.1439);">4</span>
<span class="t s b" style="left:64.60px;top:381px;font-size:12.4px;transform:scaleX(1.1149);">5</span>
<span class="t s b" style="left:64.60px;top:412px;font-size:12.4px;transform:scaleX(1.1149);">6</span>
<span class="t r" style="left:81.30px;top:178px;font-size:9.5px;transform:scaleX(0.9424);">RECIPIENT NAME</span>
<span class="t r" style="left:88.00px;top:197px;font-size:9.5px;transform:scaleX(0.9452);">University of Navy Yard</span>
<span class="t r" style="left:88.00px;top:208px;font-size:9.5px;transform:scaleX(0.9360);">125 Main Street</span>
<span class="t r" style="left:88.00px;top:219px;font-size:9.5px;transform:scaleX(0.9425);">Washington, DC 20008</span>
<span class="t r" style="left:313.30px;top:178px;font-size:9.5px;transform:scaleX(0.9371);">AWARD INFORMATION</span>
<span class="t r" style="left:335.00px;top:197px;font-size:9.5px;transform:scaleX(0.9370);">PR/AWARD NUMBER</span>
<span class="t r" style="left:347.00px;top:208px;font-size:9.5px;transform:scaleX(0.9328);">ACTION NUMBER</span>
<span class="t r" style="left:363.00px;top:219px;font-size:9.5px;transform:scaleX(0.9314);">ACTION TYPE</span>
<span class="t r" style="left:364.60px;top:230px;font-size:9.5px;transform:scaleX(0.9328);">AWARD TYPE</span>
<span class="t r" style="left:442.00px;top:197px;font-size:9.5px;transform:scaleX(0.9434);">P432A240004</span>
<span class="t r" style="left:442.00px;top:208px;font-size:9.5px;transform:scaleX(0.9053);">16</span>
<span class="t r" style="left:442.00px;top:219px;font-size:9.5px;transform:scaleX(0.9439);">Administrative</span>
<span class="t r" style="left:442.00px;top:230px;font-size:9.5px;transform:scaleX(0.9400);">Discretionary</span>
<span class="t r" style="left:442.00px;top:240px;font-size:9.5px;transform:scaleX(0.9477);">(Research and Development)</span>
<span class="t r" style="left:81.30px;top:261px;font-size:9.5px;transform:scaleX(0.9375);">PROJECT STAFF</span>
<span class="t r" style="left:88.00px;top:281px;font-size:9.5px;transform:scaleX(0.9422);">RECIPIENT PROJECT DIRECTOR</span>
<span class="t r" style="left:101.80px;top:292px;font-size:9.5px;transform:scaleX(0.9314);">Megan Jeffrey</span>
<span class="t r u" style="left:101.80px;top:302px;font-size:9.5px;transform:scaleX(0.9427);color:#0000e0;">m.jeff12@nodomain</span>
<span class="t r" style="left:88.00px;top:313px;font-size:9.5px;transform:scaleX(0.9401);">EDUCATION PROGRAM CONTACT</span>
<span class="t r" style="left:101.80px;top:324px;font-size:9.5px;transform:scaleX(0.9347);">Bruce Wayne</span>
<span class="t r" style="left:213.20px;top:324px;font-size:9.5px;transform:scaleX(0.9331);">(202) 555-5555</span>
<span class="t r u" style="left:101.80px;top:335px;font-size:9.5px;transform:scaleX(0.9433);color:#0000e0;">Bruce.Wayne@ed.gov</span>
<span class="t r" style="left:88.00px;top:345px;font-size:9.5px;transform:scaleX(0.9399);">EDUCATION PAYMENT HOTLINE</span>
<span class="t r" style="left:101.80px;top:356px;font-size:9.5px;transform:scaleX(0.9403);">G5 PAYEE HELPDESK</span>
<span class="t r" style="left:213.20px;top:356px;font-size:9.5px;transform:scaleX(0.9289);">888-336-8930</span>
<span class="t r u" style="left:101.80px;top:367px;font-size:9.5px;transform:scaleX(0.9456);color:#0000e0;">obssed1212@NODOMAIN</span>
<span class="t r" style="left:313.30px;top:261px;font-size:9.5px;transform:scaleX(0.9368);">PROJECT TITLE</span>
<span class="t r" style="left:329.50px;top:281px;font-size:9.5px;transform:scaleX(0.9242);">84.432A</span>
<span class="t r" style="left:329.50px;top:292px;font-size:9.5px;transform:scaleX(0.9368);">Subprogram</span>
<span class="t r" style="left:81.30px;top:379px;font-size:9.5px;transform:scaleX(0.9404);">KEY PERSONNEL</span>
<span class="t r" style="left:90.80px;top:398px;font-size:9.5px;transform:scaleX(0.8977);">N/A</span>
<span class="t r" style="left:81.30px;top:410px;font-size:9.5px;transform:scaleX(0.9455);">AWARD PERIODS</span>
<span class="t r" style="left:150.00px;top:430px;font-size:9.5px;transform:scaleX(0.9367);">BUDGET PERIOD</span>
<span class="t r" style="left:119.50px;top:441px;font-size:9.5px;transform:scaleX(0.9429);">PERFORMANCE PERIOD</span>
<span class="t r" style="left:242.00px;top:430px;font-size:9.5px;transform:scaleX(0.9381);">12/01/2023 - 11/30/2025</span>
<span class="t r" style="left:242.00px;top:441px;font-size:9.5px;transform:scaleX(0.9381);">12/01/2023 - 11/30/2025</span>
<span class="t r" style="left:81.30px;top:460px;font-size:9.5px;transform:scaleX(0.9403);">FUTURE BUDGET PERIODS</span></div>
</body></html>
